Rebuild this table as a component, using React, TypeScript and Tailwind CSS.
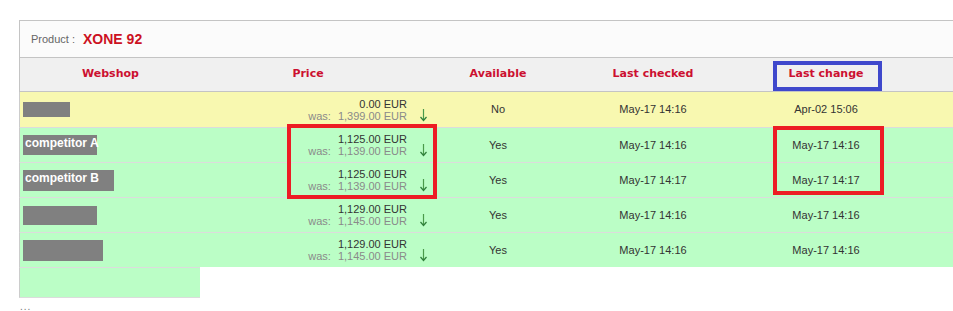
import type { ReactNode } from "react";

type Row = {
  shop: string;
  shopW: number;
  shopH: number;
  price: string;
  was: string;
  available: string;
  checked: string;
  changed: string;
  yellow?: boolean;
};

const rows: Row[] = [
  { shop: "", shopW: 47, shopH: 15, price: "0.00 EUR", was: "1,399.00 EUR", available: "No", checked: "May-17 14:16", changed: "Apr-02 15:06", yellow: true },
  { shop: "competitor A", shopW: 74, shopH: 20, price: "1,125.00 EUR", was: "1,139.00 EUR", available: "Yes", checked: "May-17 14:16", changed: "May-17 14:16" },
  { shop: "competitor B", shopW: 91, shopH: 21, price: "1,125.00 EUR", was: "1,139.00 EUR", available: "Yes", checked: "May-17 14:17", changed: "May-17 14:17" },
  { shop: "", shopW: 74, shopH: 19, price: "1,129.00 EUR", was: "1,145.00 EUR", available: "Yes", checked: "May-17 14:16", changed: "May-17 14:16" },
  { shop: "", shopW: 80, shopH: 21, price: "1,129.00 EUR", was: "1,145.00 EUR", available: "Yes", checked: "May-17 14:16", changed: "May-17 14:16" },
];

const cols = "grid grid-cols-[181px_232px_130px_180px_166px_1fr]";

function DownArrow() {
  return (
    <svg width="9" height="14" viewBox="0 0 9 14" className="shrink-0">
      <path d="M4.5 1 V12" stroke="#4a9a4a" strokeWidth="1.2" />
      <path d="M1.5 9 L4.5 12.5 L7.5 9" fill="none" stroke="#2f7f3a" strokeWidth="1.2" />
    </svg>
  );
}

function Head({ children, className = "" }: { children: ReactNode; className?: string }) {
  return (
    <div className={`flex items-center justify-center font-['DejaVu_Sans',sans-serif] text-[11px] font-bold text-[#cc1030] ${className}`}>
      {children}
    </div>
  );
}

export default function App() {
  return (
    <div className="relative w-[953px] h-[311px] overflow-hidden bg-white font-['Liberation_Sans',Arial,sans-serif] text-[11px] text-[#333]">
      <div className="pt-5 pl-[19px]">
        {/* Product header */}
        <div className="h-[37px] flex items-center gap-[8px] pl-[11px] border-t border-l border-[#c4c4c4] bg-[#fbfbfb]">
          <span className="text-[#666] text-[11px]">Product :</span>
          <span className="text-[14px] font-bold text-[#cc1122]">XONE 92</span>
        </div>

        {/* Column headers */}
        <div className={`${cols} h-[35px] border-t border-b border-l border-[#c4c4c4] bg-[#f0f0f0]`}>
          <Head>Webshop</Head>
          <Head className="pr-[18px]">Price</Head>
          <Head>Available</Head>
          <Head>Last checked</Head>
          <Head>Last change</Head>
          <div />
        </div>

        {/* Rows */}
        {rows.map((r, i) => (
          <div
            key={i}
            className={`${cols} h-[35px] border-l border-[#cccccc] ${i > 0 ? "border-t border-t-[#dcdcdc]" : ""} ${r.yellow ? "bg-[#f8f8b0]" : "bg-[#bbfec6]"}`}
          >
            <div className="flex items-center pl-[3px]">
              <div
                className="bg-[#808080] text-white font-bold text-[12px] leading-[16px] pl-[2px] whitespace-nowrap"
                style={{ width: r.shopW, height: r.shopH }}
              >
                {r.shop}
              </div>
            </div>
            <div className="flex items-center justify-end pr-[5px] gap-[12px]">
              <div className="flex flex-col items-end leading-[12px]">
                <span className="text-[#333]">{r.price}</span>
                <span className="text-[#8a8a8a]">
                  <span className="mr-[7px]">was:</span>
                  {r.was}
                </span>
              </div>
              <div className="pt-[10px]">
                <DownArrow />
              </div>
            </div>
            <div className="flex items-center justify-center">{r.available}</div>
            <div className="flex items-center justify-center">{r.checked}</div>
            <div className="flex items-center justify-center">{r.changed}</div>
            <div />
          </div>
        ))}

        {/* Trailing cell */}
        <div className="w-[181px] h-[31px] bg-[#bbfec6] border-t border-t-[#dcdcdc] border-l border-l-[#cccccc] border-b border-b-[#dcdcdc]" />

        <div className="mt-[4px] pl-[1px] text-[10px] leading-[10px] text-[#777] tracking-[1px]">...</div>
      </div>

      {/* Annotation boxes */}
      <div className="absolute left-[287px] top-[124px] w-[150px] h-[75px] border-4 border-[#ed1c24]" />
      <div className="absolute left-[773px] top-[126px] w-[111px] h-[69px] border-4 border-[#ed1c24]" />
      <div className="absolute left-[773px] top-[61px] w-[109px] h-[30px] border-4 border-[#3f48cc]" />
    </div>
  );
}
